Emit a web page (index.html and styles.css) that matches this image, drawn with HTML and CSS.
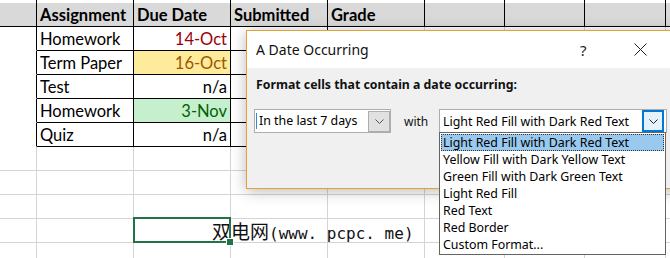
FILE: index.html
```html
<!DOCTYPE html>
<html lang="en">
  <head>
    <meta charset="UTF-8" />
    <title>A Date Occurring</title>
    <link rel="stylesheet" href="styles.css">
  </head>
  <body>
    <div class="sheet">
      <div class="row top">
        <div class="c"></div><div class="c"></div><div class="c"></div><div class="c"></div>
        <div class="c"></div><div class="c"></div><div class="c"></div><div class="c"></div><div class="c"></div>
      </div>
      <div class="row head">
        <div class="c"></div>
        <div class="c">Assignment</div>
        <div class="c">Due Date</div>
        <div class="c">Submitted</div>
        <div class="c">Grade</div>
        <div class="c"></div><div class="c"></div><div class="c"></div><div class="c"></div>
      </div>
      <div class="row data">
        <div class="c"></div>
        <div class="c">Homework</div>
        <div class="c num red">14-Oct</div>
        <div class="c"></div><div class="c"></div><div class="c"></div><div class="c"></div><div class="c"></div><div class="c"></div>
      </div>
      <div class="row data">
        <div class="c"></div>
        <div class="c">Term Paper</div>
        <div class="c num yellow">16-Oct</div>
        <div class="c"></div><div class="c"></div><div class="c"></div><div class="c"></div><div class="c"></div><div class="c"></div>
      </div>
      <div class="row data">
        <div class="c"></div>
        <div class="c">Test</div>
        <div class="c num">n/a</div>
        <div class="c"></div><div class="c"></div><div class="c"></div><div class="c"></div><div class="c"></div><div class="c"></div>
      </div>
      <div class="row data">
        <div class="c"></div>
        <div class="c">Homework</div>
        <div class="c num green">3-Nov</div>
        <div class="c"></div><div class="c"></div><div class="c"></div><div class="c"></div><div class="c"></div><div class="c"></div>
      </div>
      <div class="row data">
        <div class="c"></div>
        <div class="c">Quiz</div>
        <div class="c num">n/a</div>
        <div class="c"></div><div class="c"></div><div class="c"></div><div class="c"></div><div class="c"></div><div class="c"></div>
      </div>
      <div class="row">
        <div class="c"></div><div class="c"></div><div class="c"></div><div class="c"></div>
        <div class="c"></div><div class="c"></div><div class="c"></div><div class="c"></div><div class="c"></div>
      </div>
      <div class="row">
        <div class="c"></div><div class="c"></div><div class="c"></div><div class="c"></div>
        <div class="c"></div><div class="c"></div><div class="c"></div><div class="c"></div><div class="c"></div>
      </div>
      <div class="row">
        <div class="c"></div><div class="c"></div><div class="c"></div><div class="c"></div>
        <div class="c"></div><div class="c"></div><div class="c"></div><div class="c"></div><div class="c"></div>
      </div>
      <div class="row">
        <div class="c"></div><div class="c"></div><div class="c selected"></div><div class="c"></div>
        <div class="c"></div><div class="c"></div><div class="c"></div><div class="c"></div><div class="c"></div>
      </div>
      <div class="row">
        <div class="c"></div><div class="c"></div><div class="c"></div><div class="c"></div>
        <div class="c"></div><div class="c"></div><div class="c"></div><div class="c"></div><div class="c"></div>
      </div>
    </div>

    <div class="watermark">双电网<span class="latin">(www. pcpc. me)</span></div>

    <div class="dialog">
      <div class="titlebar">
        <span class="title">A Date Occurring</span>
        <span class="help">?</span>
        <svg class="close" width="13" height="13" viewBox="0 0 13 13">
          <path d="M0.5 0.5 L12.5 12.5 M12.5 0.5 L0.5 12.5" stroke="#222" stroke-width="1" fill="none" />
        </svg>
      </div>
      <div class="content">
        <div class="heading">Format cells that contain a date occurring:</div>
        <div class="controls">
          <div class="select period">
            <span class="value">In the last 7 days</span>
            <span class="btn">
              <svg width="9" height="5" viewBox="0 0 9 5"><path d="M0.5 0.5 L4.5 4.5 L8.5 0.5" stroke="#555" fill="none" /></svg>
            </span>
          </div>
          <span class="with">with</span>
          <div class="select format">
            <span class="value">Light Red Fill with Dark Red Text</span>
            <span class="btn">
              <svg width="9" height="5" viewBox="0 0 9 5"><path d="M0.5 0.5 L4.5 4.5 L8.5 0.5" stroke="#222" fill="none" /></svg>
            </span>
            <ul class="list">
              <li class="active">Light Red Fill with Dark Red Text</li>
              <li>Yellow Fill with Dark Yellow Text</li>
              <li>Green Fill with Dark Green Text</li>
              <li>Light Red Fill</li>
              <li>Red Text</li>
              <li>Red Border</li>
              <li>Custom Format...</li>
            </ul>
          </div>
        </div>
      </div>
    </div>
  </body>
</html>
```

FILE: styles.css
```css
* {
  margin: 0;
  padding: 0;
  box-sizing: border-box;
}

body {
  width: 670px;
  height: 258px;
  overflow: hidden;
  position: relative;
  background-color: #fff;
  font-family: "Lato", "Liberation Sans", sans-serif;
}

/* spreadsheet */

.row {
  display: grid;
  grid-template-columns: 37px 97px 97px 97px 97px 80px 80px 81px 1fr;
  height: 24px;
}

.c {
  border-right: 1px solid #d4d4d4;
  border-bottom: 1px solid #d4d4d4;
  padding: 0 3px 1px;
  display: flex;
  align-items: flex-end;
  font-size: 16.5px;
  line-height: 20px;
  white-space: nowrap;
  color: #000;
  position: relative;
}

.row.top {
  height: 3px;
}

.row.top .c {
  border-bottom: none;
  border-right-color: #000;
}

.row.head .c {
  background-color: #d9d9d9;
  border-color: #000;
  font-weight: bold;
}

.row.data .c:nth-child(1) {
  border-bottom-color: #fff;
  border-right-color: #000;
}

.row.data .c:nth-child(2),
.row.data .c:nth-child(3),
.row.data .c:nth-child(4) {
  border-color: #000;
}

.num {
  justify-content: flex-end;
}

.red {
  color: #9c0006;
}

.yellow {
  background-color: #ffeb9c;
  color: #9c5700;
}

.green {
  background-color: #c6efce;
  color: #006100;
}

.selected::after {
  content: "";
  position: absolute;
  top: -2px;
  left: -1px;
  right: -1px;
  bottom: -1px;
  border: 2px solid #217346;
}

.selected::before {
  content: "";
  position: absolute;
  right: -4px;
  bottom: -4px;
  width: 6px;
  height: 6px;
  background-color: #217346;
  border: 1px solid #fff;
  z-index: 1;
}

.watermark {
  position: absolute;
  left: 212px;
  top: 219px;
  font-family: "Noto Sans CJK SC", sans-serif;
  font-size: 19px;
  line-height: 24px;
  color: #111;
  text-shadow: 0 0 1px #fff;
  white-space: nowrap;
}

.watermark .latin {
  font-family: "DejaVu Sans Mono", monospace;
  font-size: 16px;
}

/* dialog */

.dialog {
  position: absolute;
  left: 246px;
  top: 30px;
  width: 440px;
  height: 159px;
  border: 1px solid #e3a13c;
  background-color: #f0f0f0;
  box-shadow: 0 2px 14px rgba(0, 0, 0, 0.28);
  font-family: "Noto Sans", sans-serif;
}

.titlebar {
  height: 37px;
  background-color: #fff;
  display: flex;
  align-items: center;
  padding-left: 9px;
}

.title {
  font-size: 14px;
  color: #111;
  width: 324px;
}

.help {
  font-size: 15px;
  color: #222;
  width: 54px;
}

.content {
  padding: 9px 0 0 7px;
}

.heading {
  font-size: 12.3px;
  font-weight: bold;
  padding-left: 2px;
  line-height: 16px;
  color: #111;
}

.controls {
  display: flex;
  align-items: center;
  margin-top: 16px;
}

.select {
  height: 24px;
  border: 1px solid #adadad;
  background-color: #fff;
  display: flex;
  align-items: center;
  position: relative;
  font-size: 12.4px;
}

.select .value {
  flex: 1;
  padding-left: 3px;
  white-space: nowrap;
}

.period {
  width: 137px;
}

.period .value {
  border-left: 1px solid #2e8ae6;
  margin-left: 1px;
  padding-left: 2px;
  line-height: 16px;
}

.period .btn {
  width: 22px;
  height: 21px;
  background-color: #e1e1e1;
  border: 1px solid #adadad;
  display: flex;
  align-items: center;
  justify-content: center;
}

.with {
  font-size: 12px;
  width: 22px;
  margin: 0 13px;
  color: #111;
}

.format {
  width: 228px;
}

.format .btn {
  width: 22px;
  height: 22px;
  margin-right: 2px;
  background-color: #e5f1fb;
  border: 2px solid #0078d7;
  display: flex;
  align-items: center;
  justify-content: center;
}

.list {
  list-style: none;
  position: absolute;
  left: -1px;
  top: 22px;
  width: 227px;
  border: 1px solid #646464;
  background-color: #fff;
  padding: 1px;
  font-size: 12.4px;
}

.list li {
  height: 17px;
  line-height: 17px;
  padding-left: 2px;
  white-space: nowrap;
  color: #000;
}

.list li.active {
  background-color: #99c9ef;
  outline: 1px dotted #333;
  outline-offset: -1px;
}
```
